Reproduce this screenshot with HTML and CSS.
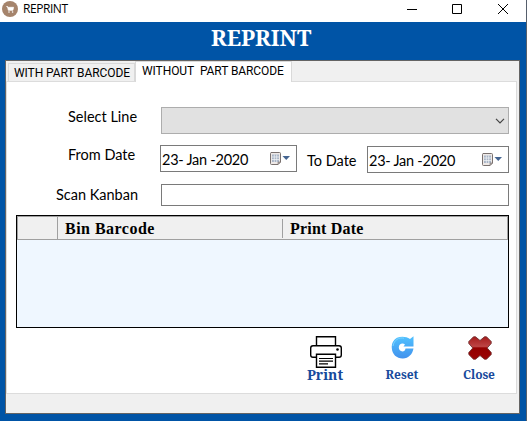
FILE: index.html
```html
<!DOCTYPE html>
<html lang="en">
<head>
<meta charset="utf-8">
<title>REPRINT</title>
<link rel="stylesheet" href="styles.css">
</head>
<body>
<div class="window">
  <header class="titlebar">
    <svg class="app-icon" width="16" height="16" viewBox="0 0 16 16"><circle cx="8" cy="8" r="8" fill="#a5846c"/><path d="M4.500 5.500h1l.8 3.800h4.600l.7-3H6z" fill="#fff" stroke="#fff" stroke-width=".7"/><circle cx="7" cy="11" r=".8" fill="#fff"/><circle cx="10.600" cy="11" r=".8" fill="#fff"/></svg>
    <span class="caption">REPRINT</span>
    <svg class="controls" width="120" height="22" viewBox="0 0 120 22" fill="none" stroke="#000"><path d="M0 9.500h10M45.500 4.500h9v9h-9zM91 4l10 10M101 4L91 14"/></svg>
  </header>
  <main class="frame">
    <h1 class="heading">REPRINT</h1>
    <section class="panel">
      <nav class="tabs">
        <div class="tab"><span class="tab-one">WITH PART BARCODE</span></div>
        <div class="tab active"><span class="tab-two">WITHOUT&nbsp; PART BARCODE</span></div>
      </nav>
      <div class="page">
        <div class="row line-row">
          <label class="w-line">Select Line</label>
          <div class="combo"><svg width="10" height="6" viewBox="0 0 10 6" fill="none" stroke="#444" stroke-width="1.2"><path d="M1 .8l4 4 4-4"/></svg></div>
        </div>
        <div class="row date-row">
          <label class="w-from">From Date</label>
          <div class="date from"><span>23- Jan -2020</span><svg width="20" height="14" viewBox="0 0 20 14"><path d="M1 .5h8.500q1 0 1 1V10l-2.500 2.500H1.500q-1 0-1-1v-10q0-1 1-1z" fill="#eee9e7" stroke="#79716f"/><path d="M2 2.500h7v7.500H2z" fill="#a9b5c6"/><path d="M2 5h7M2 7.500h7M4.300 2.500v7.500M6.700 2.500v7.500" stroke="#f4f6f8" stroke-width=".7"/><path d="M8 12.500V10h2.500z" fill="#bbb4b0" stroke="#79716f" stroke-width=".6"/><path d="M12.500 4H20l-3.750 4z" fill="#456591"/></svg></div>
          <label class="w-to">To Date</label>
          <div class="date to"><span>23- Jan -2020</span><svg width="20" height="14" viewBox="0 0 20 14"><path d="M1 .5h8.500q1 0 1 1V10l-2.500 2.500H1.500q-1 0-1-1v-10q0-1 1-1z" fill="#eee9e7" stroke="#79716f"/><path d="M2 2.500h7v7.500H2z" fill="#a9b5c6"/><path d="M2 5h7M2 7.500h7M4.300 2.500v7.500M6.700 2.500v7.500" stroke="#f4f6f8" stroke-width=".7"/><path d="M8 12.500V10h2.500z" fill="#bbb4b0" stroke="#79716f" stroke-width=".6"/><path d="M12.500 4H20l-3.750 4z" fill="#456591"/></svg></div>
        </div>
        <div class="row scan-row">
          <label class="w-scan">Scan Kanban</label>
          <div class="textbox"></div>
        </div>
        <div class="grid">
          <div class="grid-head">
            <div class="cell marker"></div>
            <div class="cell bin"><span>Bin Barcode</span></div>
            <div class="cell printed"><span>Print Date</span></div>
          </div>
        </div>
        <div class="actions">
          <div class="action print">
            <svg width="32" height="33" viewBox="0 0 32 33" fill="none" stroke="#000" stroke-width="1.4"><path d="M6.500 9.500V.7h19v8.800M6.500 21.300H3q-2.300 0-2.300-2.300v-7q0-2.300 2.300-2.300h26q2.300 0 2.300 2.300v7q0 2.300-2.300 2.300h-3.500M6.500 18.300h19v13H6.500z"/><path d="M9 22.500h14M9 25.200h14M9 27.900h9" stroke-width="1.200"/><circle cx="27.500" cy="13.500" r="1.300" fill="#000" stroke="none"/></svg>
            <span>Print</span>
          </div>
          <div class="action reset">
            <svg width="24" height="24" viewBox="0 0 24 24"><defs><linearGradient id="sky" x1="0" y1="0" x2="0" y2="1"><stop offset="0" stop-color="#50c1ff"/><stop offset="1" stop-color="#4292ed"/></linearGradient></defs><path d="M12.500 10.500H22.500V.3L19 3C15.500.3 10 .1 6 1.700 2 3.800.6 8 .8 12 1 18.500 6 22.700 12 22.500c5.500-.2 9.500-4.200 10.500-10h-8c-.5 2.200-1.300 2.900-3 2.900-2.200 0-3.700-1.700-3.700-3.900 0-3.600 3.700-5 6.200-3z" fill="url(#sky)"/><path d="M2 10C3 4 8 1 13 2.200" fill="none" stroke="#7bd4ff" stroke-width="1"/></svg>
            <span>Reset</span>
          </div>
          <div class="action close">
            <svg width="24" height="24" viewBox="0 0 24 24"><defs><linearGradient id="red" x1="0" y1="0" x2="0" y2="1"><stop offset="0" stop-color="#a51b1b"/><stop offset=".43" stop-color="#bd4545"/><stop offset=".5" stop-color="#930000"/><stop offset="1" stop-color="#9b0505"/></linearGradient></defs><path d="M.8 5.500L5.500.8h2L12 4.500 16.500.8h2l4.700 4.700v2L19.200 12l4 4.500v2l-4.700 4.700h-2L12 19.500l-4.500 3.700h-2L.8 18.500v-2l4-4.500-4-4.500z" fill="url(#red)" stroke="#713030" stroke-width=".9"/></svg>
            <span>Close</span>
          </div>
        </div>
      </div>
    </section>
  </main>
</div>
</body>
</html>
```
FILE: styles.css
```css
* { box-sizing: border-box; }
body { margin: 0; font-family: Lato, "Liberation Sans", sans-serif; color: #000; }
svg { display: block; flex: none; }
.window { width: 527px; height: 421px; display: flex; flex-direction: column; border-right: 1px solid #565f6c; background: #0054a6; overflow: hidden; }
.titlebar { height: 22px; flex: none; display: flex; background: #fff; padding-left: 2px; }
.app-icon { margin-top: 1px; }
.caption { font: 12px/17px "Open Sans", sans-serif; margin-left: 5px; letter-spacing: -.45px; }
.controls { margin-left: auto; margin-right: -1px; }
.frame { flex: 1; padding: 0 6px 7px 5px; display: flex; flex-direction: column; }
.heading { margin: 0; height: 38px; padding-left: 206px; font: bold 22px/30px "Noto Serif", "DejaVu Serif Condensed", "Liberation Serif", serif; color: #fff; white-space: nowrap; }
.panel { height: 354px; flex: none; background: #f0f0f0; border: 1px solid #646464; padding-right: 2px; }
.tabs { height: 21px; display: flex; padding-left: 2px; position: relative; }
.tab { width: 127px; height: 18px; margin-top: 2px; border: 1px solid #d9d9d9; border-bottom: 0; padding-left: 5px; font: 12px/18px Roboto, sans-serif; letter-spacing: -.08px; white-space: nowrap; }
.tab.active { width: 157px; height: 21px; margin-top: 0; background: #fff; padding-left: 6px; }
.page { height: 313px; margin-top: -1px; background: #fff; border: 1px solid #dcdcdc; display: flex; flex-direction: column; }
.row { display: flex; flex: none; font-size: 14.500px; line-height: 18px; }
.row label { white-space: nowrap; flex: none; }
.line-row { height: 63px; padding: 25px 0 0 61px; }
.w-line { width: 93px; margin-top: 1px; }
.combo { width: 348px; height: 27px; border: 1px solid #adadad; background: #e1e1e1; display: flex; justify-content: flex-end; padding: 10px 3px 0 0; }
.date-row { height: 39px; padding-left: 61px; }
.w-from { width: 92px; margin-top: 1px; }
.date { height: 27px; border: 1px solid #7a7a7a; display: flex; justify-content: space-between; padding: 4px 6px 0 1px; }
.date span { line-height: 19px; letter-spacing: -.25px; white-space: nowrap; }
.date svg { margin-top: 2px; }
.from { width: 137px; }
.w-to { width: 70px; padding-left: 10px; margin-top: 7px; }
.to { width: 142px; margin-top: 1px; }
.scan-row { height: 31px; padding-left: 49px; }
.w-scan { width: 105px; margin-top: 2px; }
.textbox { width: 348px; height: 22px; border: 1px solid #7a7a7a; }
.grid { width: 493px; height: 113px; flex: none; margin-left: 9px; border: 1px solid #000; background: #eff7ff; }
.grid-head { height: 24px; border: 1px solid #a0a0a0; background: #f0f0f0; display: flex; }
.cell { font: bold 16px/24px "Liberation Serif", serif; white-space: nowrap; }
.marker { width: 40px; border-right: 1px solid #a0a0a0; }
.bin { width: 224px; padding-left: 7px; letter-spacing: .48px; }
.printed { height: 19px; margin-top: 2px; border-left: 1px solid #a0a0a0; padding-left: 7px; line-height: 20px; letter-spacing: .2px; }
.actions { display: flex; margin-top: 8px; padding-left: 300px; color: #174a9c; }
.action { display: flex; flex-direction: column; align-items: center; font: bold 12px/16px "Noto Serif", "DejaVu Serif Condensed", "Liberation Serif", serif; white-space: nowrap; }
.action svg { position: relative; left: 1px; }
.print { width: 36px; font-size: 14px; }
.print span { margin-top: -2px; }
.reset { width: 36px; margin-left: 41px; }
.close { width: 36px; margin-left: 41px; letter-spacing: -.1px; }
.reset span, .close span { margin-top: 7px; }
```
